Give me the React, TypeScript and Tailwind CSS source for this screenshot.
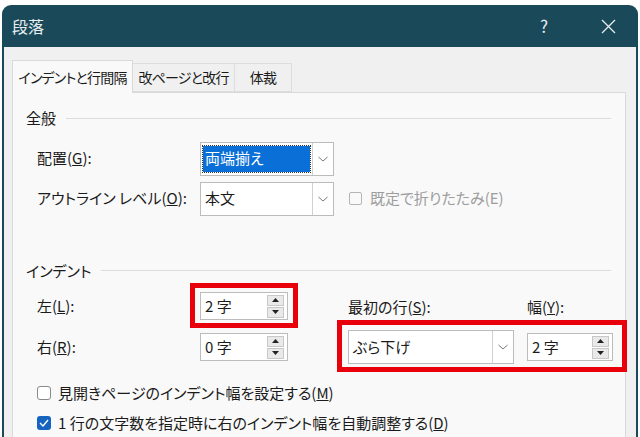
import React from 'react';

const font = "font-['Noto_Sans_CJK_JP','Noto_Sans',sans-serif] [font-feature-settings:'palt']";

function Chevron() {
  return (
    <svg width="12" height="8" viewBox="0 0 12 8" fill="none">
      <path d="M1.5 2 L6 6 L10.5 2" stroke="#7a7a7a" strokeWidth="1" />
    </svg>
  );
}

function Combo({ value, width, selected }: { value: string; width: string; selected?: boolean }) {
  return (
    <div className={`flex h-[34px] ${width} border border-[#bcbcbc] bg-white`}>
      <div className="flex flex-1 items-center px-[2px]">
        {selected ? (
          <span className="flex h-[26px] w-full items-center bg-[#0a6fd6] px-[2px] text-white outline-1 outline-dotted outline-[#333]">
            {value}
          </span>
        ) : (
          <span className="pl-[2px]">{value}</span>
        )}
      </div>
      <div className="flex w-[21px] items-center justify-center border-l border-[#d0d0d0]">
        <Chevron />
      </div>
    </div>
  );
}

function Spin({ value, width = 'w-[88px]' }: { value: string; width?: string }) {
  return (
    <div className={`flex h-[28px] ${width} items-center border border-[#bcbcbc] bg-white pr-[3px]`}>
      <span className="flex-1 pl-[4px]">{value}</span>
      <div className="flex flex-col gap-px">
        <div className="flex h-[11px] w-[17px] items-center justify-center border border-[#c8c8c8] bg-[#e9e9e9]">
          <svg width="7" height="4" viewBox="0 0 7 4"><path d="M0 4 L3.5 0 L7 4Z" fill="#222" /></svg>
        </div>
        <div className="flex h-[11px] w-[17px] items-center justify-center border border-[#c8c8c8] bg-[#e9e9e9]">
          <svg width="7" height="4" viewBox="0 0 7 4"><path d="M0 0 L3.5 4 L7 0Z" fill="#222" /></svg>
        </div>
      </div>
    </div>
  );
}

function SectionTitle({ text }: { text: string }) {
  return (
    <div className="flex items-center gap-[10px] pl-[13px] pr-[14px]">
      <span>{text}</span>
      <div className="h-px flex-1 bg-[#dcdcdc]" />
    </div>
  );
}

export default function App() {
  return (
    <div className={`h-[437px] w-[640px] overflow-hidden bg-white px-[2px] pt-[5px] text-[15px] text-[#1b1b1b] ${font}`}>
      <div className="flex h-full flex-col rounded-t-[9px] bg-[#1a4959] px-[2px]">
        {/* title bar */}
        <div className="flex h-[42px] shrink-0 items-center pl-[8px] pr-[13px] text-[16px] text-[#e8eef0]">
          <span className="flex-1">段落</span>
          <span className="w-[30px] text-center text-[17px]">?</span>
          <div className="ml-[34px] flex w-[30px] justify-center">
            <svg width="15" height="15" viewBox="0 0 15 15">
              <path d="M1 1 L14 14 M14 1 L1 14" stroke="#e8eef0" strokeWidth="1.3" />
            </svg>
          </div>
        </div>

        <div className="flex-1 bg-[#f0f0f0] pl-[8px] pr-[10px] pt-[13px]">
          {/* tabs */}
          <div className="flex h-[32px] items-end text-[14px] tracking-[-0.8px]">
            <div className="relative z-10 -mb-px flex h-[33px] w-[121px] items-center justify-center border border-b-0 border-[#d9d9d9] bg-[#f9f9f9]">
              インデントと行間隔
            </div>
            <div className="flex h-[29px] w-[102px] items-center justify-center border border-l-0 border-[#dddddd] bg-[#f0f0f0]">
              改ページと改行
            </div>
            <div className="flex h-[29px] w-[57px] items-center justify-center border border-l-0 border-[#dddddd] bg-[#f0f0f0]">
              体裁
            </div>
          </div>

          {/* panel */}
          <div className="h-[400px] border border-[#d9d9d9] bg-[#f9f9f9] pt-[14px]">
            <SectionTitle text="全般" />

            <div className="mt-[12px] flex flex-col gap-[6px] pl-[24px]">
              <div className="flex items-center">
                <span className="w-[163px]">配置(<span className="underline">G</span>):</span>
                <Combo value="両端揃え" width="w-[134px]" selected />
              </div>
              <div className="flex items-center">
                <span className="w-[163px]">アウトライン レベル(<span className="underline">O</span>):</span>
                <Combo value="本文" width="w-[134px]" />
                <div className="ml-[15px] flex items-center gap-[8px] text-[#9d9d9d]">
                  <div className="h-[13px] w-[13px] rounded-[2px] border border-[#b5b5b5]" />
                  <span>既定で折りたたみ(E)</span>
                </div>
              </div>
            </div>

            <div className="mt-[44px]">
              <SectionTitle text="インデント" />
            </div>

            <div className="mt-[10px] flex pl-[24px]">
              <div className="flex flex-col gap-[13px]">
                <div className="flex items-center">
                  <span className="w-[163px]">左(<span className="underline">L</span>):</span>
                  <div className="relative">
                    <Spin value="2 字" />
                    <div className="absolute -inset-x-[10px] -bottom-[8px] -top-[9px] border-[5px] border-[#e8000b]" />
                  </div>
                </div>
                <div className="flex items-center">
                  <span className="w-[163px]">右(<span className="underline">R</span>):</span>
                  <Spin value="0 字" />
                </div>
              </div>

              <div className="ml-[50px] flex flex-col">
                <div className="flex h-[26px] items-end">
                  <span className="w-[189px] pl-[10px]">最初の行(<span className="underline">S</span>):</span>
                  <span>幅(<span className="underline">Y</span>):</span>
                </div>
                <div className="relative mt-[12px] flex items-center gap-[13px] pl-[10px]">
                  <Combo value="ぶら下げ" width="w-[166px]" />
                  <Spin value="2 字" width="w-[86px]" />
                  <div className="absolute -bottom-[8px] -left-[1px] -right-[14px] -top-[10px] border-[5px] border-[#e8000b]" />
                </div>
              </div>
            </div>

            <div className="mt-[18px] flex flex-col gap-[7px] pl-[24px]">
              <div className="flex items-center gap-[7px]">
                <div className="h-[14px] w-[14px] rounded-[3px] border border-[#8a8a8a] bg-white" />
                <span>見開きページのインデント幅を設定する(<span className="underline">M</span>)</span>
              </div>
              <div className="flex items-center gap-[7px]">
                <div className="flex h-[14px] w-[14px] items-center justify-center rounded-[3px] bg-[#1565c0]">
                  <svg width="10" height="8" viewBox="0 0 10 8" fill="none">
                    <path d="M1 4 L4 7 L9 1" stroke="white" strokeWidth="1.4" />
                  </svg>
                </div>
                <span>1 行の文字数を指定時に右のインデント幅を自動調整する(<span className="underline">D</span>)</span>
              </div>
            </div>
          </div>
        </div>
      </div>
    </div>
  );
}
